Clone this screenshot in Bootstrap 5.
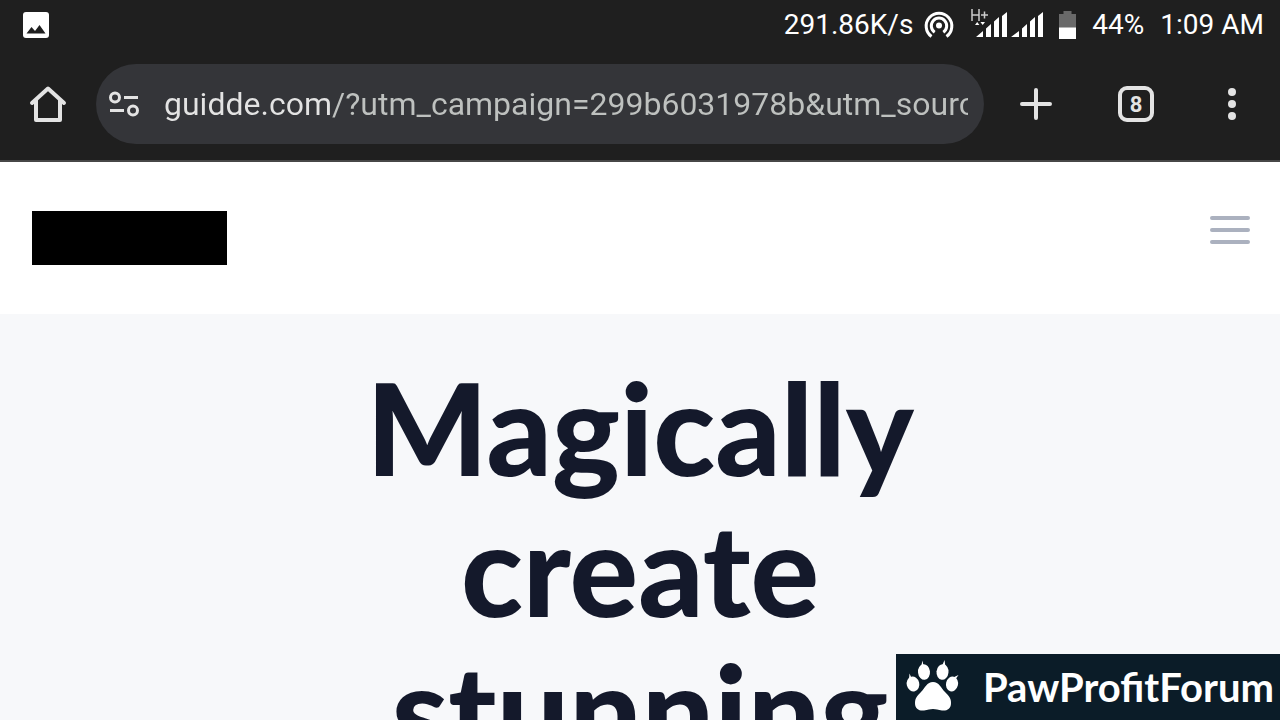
<!DOCTYPE html>
<html lang="en">
<head>
<meta charset="utf-8">
<meta name="viewport" content="width=device-width, initial-scale=1">
<title>Guidde</title>
<link href="https://cdn.jsdelivr.net/npm/bootstrap@5.3.0/dist/css/bootstrap.min.css" rel="stylesheet">
<style>
  body { font-family: Roboto, sans-serif; background: #f7f8fa; }
  .chrome { background: #1f1f1f; color: #e3e3e3; border-bottom: 2px solid #474747; }
  .status { height: 50px; font-size: 28px; line-height: 48px; color: #fff; padding: 0 16px 0 20px; }
  .toolbar { height: 110px; padding-bottom: 2px; }
  .tool { width: 96px; height: 80px; padding: 0; border: 0; background: none; color: inherit; }
  .tool-wide { width: 104px; }
  .omnibox { height: 80px; background: #343539; padding: 0 16px 0 8px; }
  .site-info { width: 32px; height: 40px; padding: 0; border: 0; background: none; color: inherit; }
  .address {
    height: 48px; margin-left: 24px; padding: 0; border: 0; outline: 0; min-width: 0;
    font-size: 32px; line-height: 48px; color: transparent;
    background: linear-gradient(90deg, #e3e3e3 167px, #bec1bf 167px);
    -webkit-background-clip: text; background-clip: text;
  }
  .site-nav { height: 152px; padding: 0 32px; background: #fff; }
  .brand-block { width: 195px; height: 54px; background: #000; }
  .menu-btn { width: 64px; height: 64px; padding: 0; border: 0; background: none; color: #abb1bf; margin-right: -20px; padding-right: 12px; margin-bottom: 16px; }
  .hero { padding-top: 42px; }
  .hero-title { font-family: Lato, sans-serif; font-weight: 900; font-size: 128px; line-height: 141px; color: #14192b; }
  .forum-mark { width: 384px; height: 66px; background: #0b1c28; color: #fff; font-family: Lato, sans-serif; font-weight: 700; font-size: 40px; line-height: 64px; padding: 0 6px 0 8px; }
</style>
</head>
<body class="vh-100 overflow-hidden d-flex flex-column position-relative">
<header class="chrome flex-shrink-0">
  <div class="status d-flex align-items-center">
    <svg width="32" height="32" viewBox="0 0 32 32" aria-hidden="true"><rect x="3" y="3" width="26" height="26" rx="3" fill="#fff"/><path d="M6.500 24.500 11.500 18 15 22 19.500 16 25.500 24.500Z" fill="#1f1f1f"/></svg>
    <div class="ms-auto d-flex align-items-center">
      <span>291.86K/s</span>
      <svg class="ms-2" width="34" height="36" viewBox="0 0 34 36" fill="none" stroke="#fff" stroke-width="3" aria-hidden="true"><circle cx="18" cy="18.500" r="3" fill="#fff" stroke="none"/><path d="M10.500 29.500A12.800 12.800 0 1 1 25.500 29.500M13.700 25.200A7.700 7.700 0 1 1 22.300 25.200"/></svg>
      <svg class="ms-3" width="72" height="36" viewBox="0 0 72 36" fill="#fff" aria-label="Signal strength">
        <path d="M1 2V14M8 2V14M1 8H8M10 8H17M13.500 4.500V11.500" fill="none" stroke="#ccc" stroke-width="1.500"/>
        <path d="M4 18 6.200 15 8.400 18ZM9.400 15H14L11.700 18Z"/>
        <path d="M5 30 12 24V30ZM15 21.500 20 17V30H15ZM23 14.500 28 10V30H23ZM31 9 36 5V30H31ZM40 30 48 24V30ZM51 21.500 56 17V30H51ZM59 14.500 64 10V30H59ZM67 9 72 5V30H67Z"/>
      </svg>
      <svg class="mx-3" width="17" height="36" viewBox="0 0 19 36" preserveAspectRatio="none" aria-label="Battery"><path d="M5 4H14V7H19V21H0V7H5Z" fill="#696969"/><path d="M0 20.500H19V32H0Z" fill="#fff"/></svg>
      <span>44%</span>
      <span class="ms-3">1:09 AM</span>
    </div>
  </div>
  <div class="toolbar d-flex align-items-center">
    <button class="tool" type="button" aria-label="Home"><svg width="40" height="40" viewBox="0 0 40 40" fill="none" stroke="currentColor" stroke-width="4" stroke-linejoin="round" stroke-linecap="round"><path d="M4 19 20 4.500 36 19M8 16V36H32V16"/></svg></button>
    <div class="omnibox rounded-pill flex-grow-1 d-flex align-items-center">
      <button class="site-info ms-1" type="button" aria-label="Site information"><svg class="d-block" width="32" height="40" viewBox="0 0 32 40" fill="none" stroke="currentColor" stroke-width="3"><circle cx="7" cy="13.500" r="4.500"/><path d="M16 13.500H30M2 26.500H16"/><circle cx="25" cy="26.500" r="4.500"/></svg></button>
      <input class="address flex-grow-1" type="text" aria-label="Address" value="guidde.com/?utm_campaign=299b6031978b&amp;utm_source">
    </div>
    <button class="tool tool-wide" type="button" aria-label="New tab"><svg width="40" height="40" viewBox="0 0 40 40" stroke="currentColor" stroke-width="4" stroke-linecap="round"><path d="M20 6V34M6 20H34"/></svg></button>
    <button class="tool" type="button" aria-label="8 open tabs"><svg width="40" height="40" viewBox="0 0 40 40"><rect x="4" y="4" width="32" height="32" rx="7" fill="none" stroke="currentColor" stroke-width="4"/><text x="20" y="28" text-anchor="middle" font-family="Roboto" font-weight="700" font-size="22" fill="currentColor">8</text></svg></button>
    <button class="tool" type="button" aria-label="More options"><svg width="40" height="40" viewBox="0 0 40 40" fill="currentColor"><circle cx="20" cy="8" r="4"/><circle cx="20" cy="20" r="4"/><circle cx="20" cy="32" r="4"/></svg></button>
  </div>
</header>
<nav class="site-nav flex-shrink-0 d-flex align-items-center justify-content-between">
  <a class="brand-block" href="#" aria-label="Site home"></a>
  <button class="menu-btn" type="button" aria-label="Menu"><svg width="40" height="40" viewBox="0 0 40 40" stroke="currentColor" stroke-width="4" stroke-linecap="round"><path d="M2 8H38M2 20H38M2 32H38"/></svg></button>
</nav>
<main class="hero flex-grow-1 overflow-hidden text-center">
  <h1 class="hero-title m-0">Magically<br>create<br>stunning</h1>
</main>
<aside class="forum-mark position-absolute bottom-0 end-0 d-flex align-items-center justify-content-between">
  <svg width="56" height="58" viewBox="0 0 56 58" fill="#fff" aria-hidden="true">
    <ellipse cx="9" cy="26" rx="6.300" ry="7.500" transform="rotate(-14 9 26)"/>
    <ellipse cx="20" cy="14" rx="6" ry="7.800" transform="rotate(-6 20 14)"/>
    <ellipse cx="38.500" cy="14" rx="6" ry="7.800" transform="rotate(6 38.500 14)"/>
    <ellipse cx="48" cy="26" rx="6" ry="7.500" transform="rotate(14 48 26)"/>
    <path d="M5 21 5.500 15.500 7.500 20ZM17 9 18.500 2.500 19.500 8ZM38 8 40.500 2 41.500 9ZM48 20 54.500 17 51 22Z"/>
    <path d="M29 24C23 24 21 30 17 34C13 38 11 40 11 45C11 51 15 53 20 52.500C24 52 26 51 29 51C32 51 34 52 38 52.500C43 53 47 51 47 45C47 40 45 38 41 34C37 30 35 24 29 24Z"/>
  </svg>
  <span>PawProfitForum</span>
</aside>
<script src="https://cdn.jsdelivr.net/npm/bootstrap@5.3.0/dist/js/bootstrap.bundle.min.js"></script>
</body>
</html>
